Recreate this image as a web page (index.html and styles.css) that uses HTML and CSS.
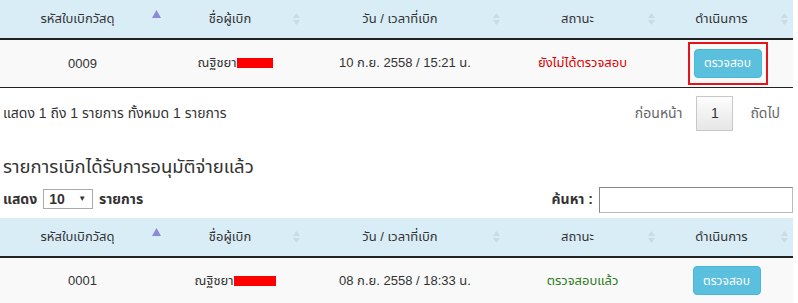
FILE: index.html
```html
<!DOCTYPE html>
<html lang="th">
<head>
<meta charset="UTF-8" />
<title>รายการเบิกวัสดุ</title>
<link rel="stylesheet" href="styles.css">
</head>
<body>
<div class="page">
  <!-- Pending requests -->
  <table class="data-table">
    <thead>
      <tr>
        <th class="c1">รหัสใบเบิกวัสดุ<span class="sort asc"><svg width="9" height="8" viewBox="0 0 9 8"><path d="M4.5 0L9 8H0z" fill="#8a8ad6"/></svg></span></th>
        <th class="c2">ชื่อผู้เบิก<span class="sort"><svg width="7" height="12" viewBox="0 0 7 12"><path d="M3.5 0L7 5H0zM3.5 12L0 7h7z" fill="#c9dce6"/></svg></span></th>
        <th class="c3">วัน / เวลาที่เบิก<span class="sort"><svg width="7" height="12" viewBox="0 0 7 12"><path d="M3.5 0L7 5H0zM3.5 12L0 7h7z" fill="#c9dce6"/></svg></span></th>
        <th class="c4">สถานะ<span class="sort"><svg width="7" height="12" viewBox="0 0 7 12"><path d="M3.5 0L7 5H0zM3.5 12L0 7h7z" fill="#c9dce6"/></svg></span></th>
        <th class="c5">ดำเนินการ<span class="sort"><svg width="7" height="12" viewBox="0 0 7 12"><path d="M3.5 0L7 5H0zM3.5 12L0 7h7z" fill="#c9dce6"/></svg></span></th>
      </tr>
    </thead>
    <tbody>
      <tr>
        <td>0009</td>
        <td>ณฐิชยา<span class="redact"></span></td>
        <td>10 ก.ย. 2558 / 15:21 น.</td>
        <td class="st-pending">ยังไม่ได้ตรวจสอบ</td>
        <td><span class="highlight"><button class="btn-info">ตรวจสอบ</button></span></td>
      </tr>
    </tbody>
  </table>

  <div class="table-footer">
    <div class="info">แสดง 1 ถึง 1 รายการ ทั้งหมด 1 รายการ</div>
    <div class="paging">
      <span class="page-link prev">ก่อนหน้า</span>
      <span class="page-num">1</span>
      <span class="page-link next">ถัดไป</span>
    </div>
  </div>

  <!-- Approved requests -->
  <h3 class="section-title">รายการเบิกได้รับการอนุมัติจ่ายแล้ว</h3>
  <div class="table-tools">
    <label class="length">แสดง <span class="select">10<span class="caret">▼</span></span> รายการ</label>
    <label class="filter">ค้นหา : <span class="search"></span></label>
  </div>

  <table class="data-table">
    <thead>
      <tr>
        <th class="c1">รหัสใบเบิกวัสดุ<span class="sort asc"><svg width="9" height="8" viewBox="0 0 9 8"><path d="M4.5 0L9 8H0z" fill="#8a8ad6"/></svg></span></th>
        <th class="c2">ชื่อผู้เบิก<span class="sort"><svg width="7" height="12" viewBox="0 0 7 12"><path d="M3.5 0L7 5H0zM3.5 12L0 7h7z" fill="#c9dce6"/></svg></span></th>
        <th class="c3">วัน / เวลาที่เบิก<span class="sort"><svg width="7" height="12" viewBox="0 0 7 12"><path d="M3.5 0L7 5H0zM3.5 12L0 7h7z" fill="#c9dce6"/></svg></span></th>
        <th class="c4">สถานะ<span class="sort"><svg width="7" height="12" viewBox="0 0 7 12"><path d="M3.5 0L7 5H0zM3.5 12L0 7h7z" fill="#c9dce6"/></svg></span></th>
        <th class="c5">ดำเนินการ<span class="sort"><svg width="7" height="12" viewBox="0 0 7 12"><path d="M3.5 0L7 5H0zM3.5 12L0 7h7z" fill="#c9dce6"/></svg></span></th>
      </tr>
    </thead>
    <tbody>
      <tr>
        <td>0001</td>
        <td>ณฐิชยา<span class="redact wide"></span></td>
        <td>08 ก.ย. 2558 / 18:33 น.</td>
        <td class="st-done">ตรวจสอบแล้ว</td>
        <td><button class="btn-info">ตรวจสอบ</button></td>
      </tr>
    </tbody>
  </table>
</div>
</body>
</html>
```

FILE: styles.css
```css
* {
  box-sizing: border-box;
  margin: 0;
  padding: 0;
}
body {
  background: #fff;
  font-family: Tahoma, "Liberation Sans", "Noto Sans Thai", "Noto Sans", sans-serif;
  font-size: 13px;
  color: #333;
}
.page {
  width: 798px;
  height: 303px;
  overflow: hidden;
}
.data-table {
  width: 793px;
  border-collapse: collapse;
  table-layout: fixed;
}
.data-table th {
  position: relative;
  height: 39px;
  background: #d9edf7;
  border-bottom: 2px solid #222;
  font-weight: normal;
  font-size: 13px;
  color: #333;
  text-align: center;
  padding-right: 10px;
}
.c1 { width: 165px; }
.c2 { width: 140px; }
.c3 { width: 200px; }
.c4 { width: 155px; }
.c5 { width: 133px; }
.sort {
  position: absolute;
  right: 5px;
  top: 13px;
  line-height: 0;
}
.sort.asc {
  top: 10px;
  right: 4px;
}
.data-table td {
  height: 48px;
  background: #f9f9f9;
  border-bottom: 1px solid #222;
  text-align: center;
  font-size: 13px;
}
.redact {
  display: inline-block;
  width: 36px;
  height: 10px;
  background: #f00;
  vertical-align: -1px;
}
.redact.wide {
  width: 42px;
}
.st-pending {
  color: #e00000;
}
.data-table td.st-done {
  color: #2f7a1c;
}
.btn-info {
  width: 68px;
  height: 29px;
  background: #5bc0de;
  border: 1px solid #46b8da;
  border-radius: 4px;
  color: #fff;
  font-family: inherit;
  font-size: 12px;
}
.highlight {
  display: inline-block;
  padding: 5px 4px;
  border: 2px solid #e3141b;
  line-height: 0;
  margin-left: 2px;
}
.table-footer {
  width: 793px;
  display: flex;
  justify-content: space-between;
  align-items: center;
  height: 45px;
  padding: 6px 0 0 3px;
}
.info {
  font-size: 14px;
}
.paging {
  display: flex;
  align-items: center;
  font-size: 14px;
  margin-right: 13px;
}
.page-link {
  color: #666;
}
.prev {
  padding-right: 14px;
}
.next {
  padding-left: 17px;
}
.page-num {
  display: inline-block;
  width: 37px;
  height: 35px;
  line-height: 33px;
  text-align: center;
  border: 1px solid #c8c8c8;
  background: linear-gradient(#fdfdfd, #e6e6e6);
  color: #333;
}
.section-title {
  font-size: 18.5px;
  font-weight: normal;
  color: #333;
  padding: 20px 0 0 3px;
  height: 52px;
}
.table-tools {
  display: flex;
  justify-content: space-between;
  align-items: center;
  height: 33px;
  padding: 0 5px 3px 3px;
  font-size: 14px;
}
.length {
  font-weight: bold;
}
.select {
  display: inline-block;
  width: 50px;
  height: 20px;
  border: 1px solid #aaa;
  padding: 0 0 0 5px;
  line-height: 18px;
  font-weight: bold;
  margin: 0 2px;
  position: relative;
}
.caret {
  position: absolute;
  right: 6px;
  top: 0;
  font-size: 8px;
}
.filter {
  font-weight: bold;
  display: flex;
  align-items: center;
}
.search {
  display: inline-block;
  width: 194px;
  height: 26px;
  border: 1px solid #bbb;
  border-top-color: #888;
  border-left-color: #888;
  margin-left: 6px;
}
```
